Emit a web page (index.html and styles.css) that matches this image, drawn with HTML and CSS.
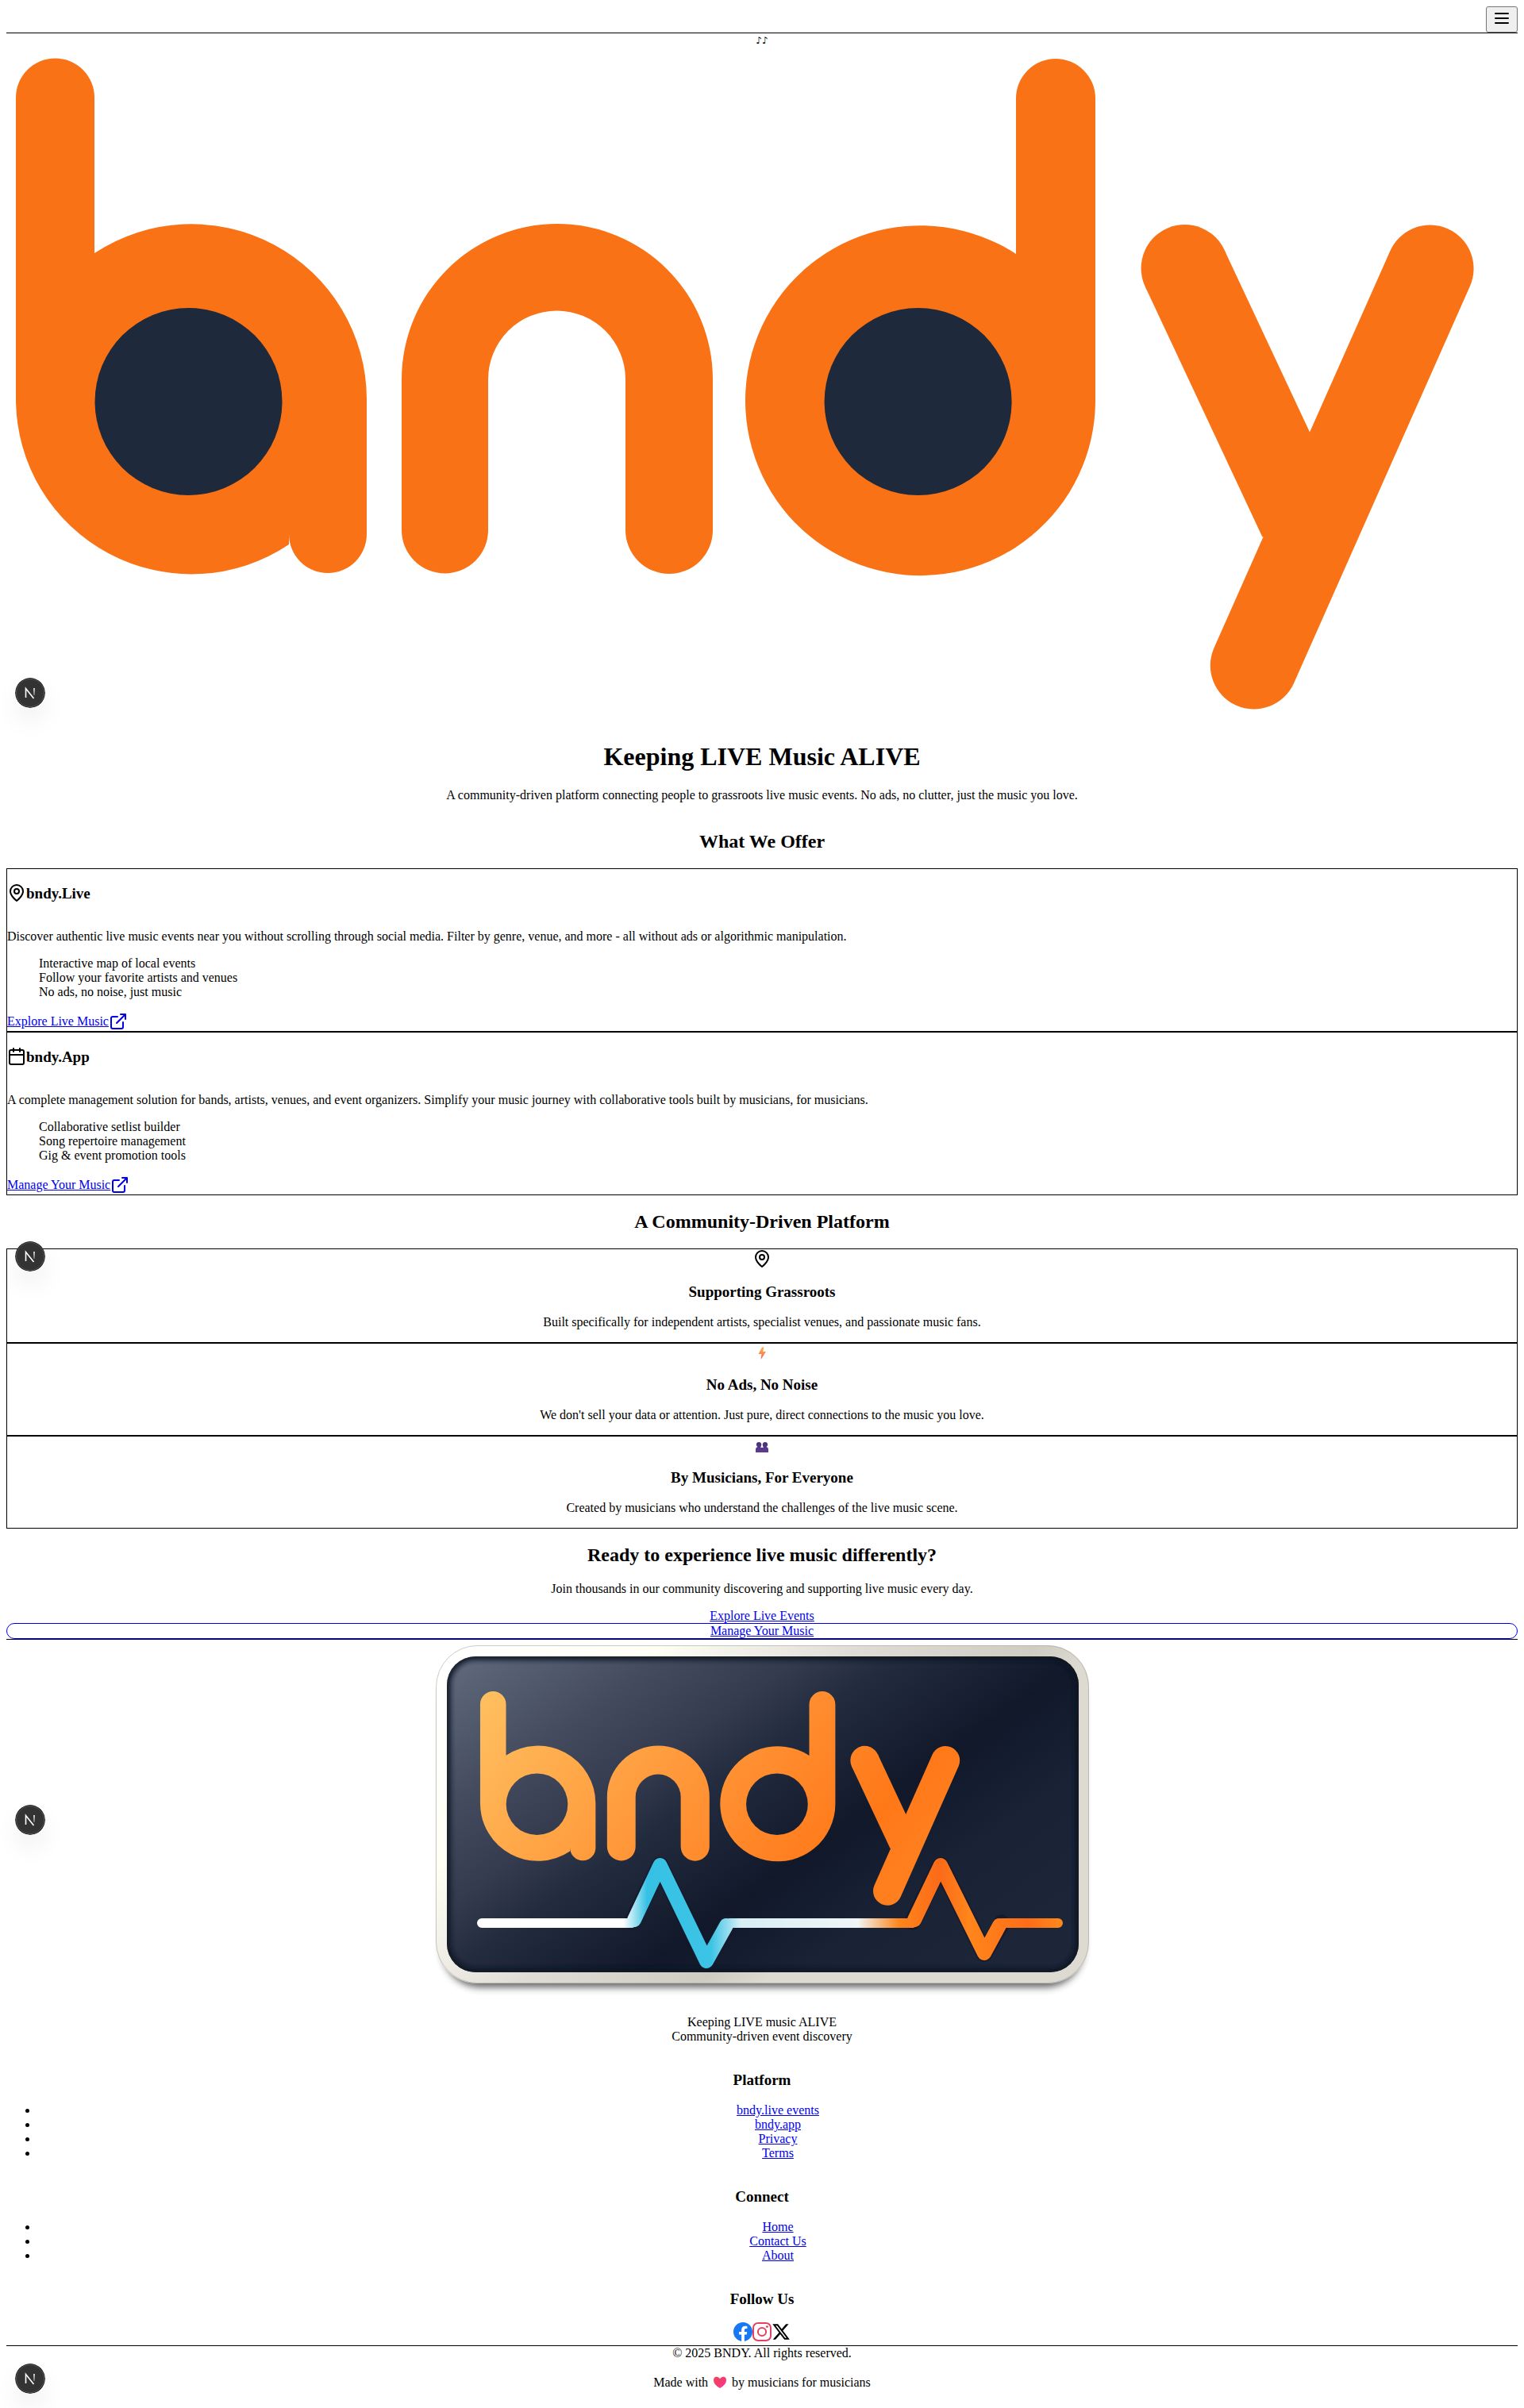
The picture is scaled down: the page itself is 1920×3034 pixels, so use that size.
FILE: index.html
```html
<!DOCTYPE html>
<html lang="en">
<head>
<meta charset="utf-8">
<meta name="viewport" content="width=device-width, initial-scale=1">
<title>bndy - Keeping LIVE Music ALIVE</title>
<link rel="stylesheet" href="styles.css">
</head>
<body>
<svg class="defs" width="0" height="0" aria-hidden="true">
  <defs>
    <g id="bndy-shapes">
      <path d="M12 63a49.500 49.500 0 0 1 99 0V259A221 221 0 0 1 454 443V613A49 49 0 0 1 356 613V626A221 221 0 0 1 12 443z"/>
      <path d="M498 418a196 196 0 0 1 392 0V608a55 55 0 0 1 -110 0V418a86.500 86.500 0 0 0 -173 0V608a54.500 54.500 0 0 1 -109 0z"/>
      <path d="M1272 64a50 50 0 0 1 100 0V445A220.500 220.500 0 1 1 1272 260z"/>
      <circle cx="1484.600" cy="278" r="55"/>
      <path d="M1484.600 278L1632.300 593.300" stroke="currentColor" stroke-width="110"/>
      <path d="M1793.600 278.500L1571.800 778.500" stroke="currentColor" stroke-width="110" stroke-linecap="round"/>
    </g>
    <g id="bndy-bowls">
      <circle cx="229.500" cy="446" r="118"/>
      <circle cx="1148.600" cy="446" r="118"/>
    </g>
    <symbol id="pin" viewBox="0 0 24 24">
      <path d="M20 10c0 6-8 12-8 12s-8-6-8-12a8 8 0 0 1 16 0z"/><circle cx="12" cy="10" r="3"/>
    </symbol>
    <symbol id="external" viewBox="0 0 24 24">
      <path d="M18 13v6a2 2 0 0 1-2 2H5a2 2 0 0 1-2-2V8a2 2 0 0 1 2-2h6M15 3h6v6M10 14L21 3"/>
    </symbol>
  </defs>
</svg>

<header class="topbar">
  <button class="menu" type="button" aria-label="Open menu">
    <svg class="icon" viewBox="0 0 24 24"><path d="M4 6h16M4 12h16M4 18h16"/></svg>
  </button>
</header>

<main>
  <section class="hero">
    <div class="notes">♪♪</div>
    <svg class="wordmark" viewBox="0 0 1904 854" role="img" aria-label="bndy">
      <use href="#bndy-shapes" class="wordmark-body"/>
      <use href="#bndy-bowls" class="wordmark-bowl"/>
    </svg>
    <h1>Keeping LIVE Music ALIVE</h1>
    <p>A community-driven platform connecting people to grassroots live music events. No ads, no clutter, just the music you love.</p>
  </section>

  <section class="offer">
    <h2>What We Offer</h2>
    <article class="card">
      <h3 class="card-title"><svg class="icon"><use href="#pin"/></svg>bndy.Live</h3>
      <p>Discover authentic live music events near you without scrolling through social media. Filter by genre, venue, and more - all without ads or algorithmic manipulation.</p>
      <ul class="features">
        <li>Interactive map of local events</li>
        <li>Follow your favorite artists and venues</li>
        <li>No ads, no noise, just music</li>
      </ul>
      <a class="card-link" href="#live">Explore Live Music<svg class="icon"><use href="#external"/></svg></a>
    </article>
    <article class="card">
      <h3 class="card-title"><svg class="icon" viewBox="0 0 24 24"><rect x="3" y="4" width="18" height="18" rx="2"/><path d="M16 2v4M8 2v4M3 10h18"/></svg>bndy.App</h3>
      <p>A complete management solution for bands, artists, venues, and event organizers. Simplify your music journey with collaborative tools built by musicians, for musicians.</p>
      <ul class="features">
        <li>Collaborative setlist builder</li>
        <li>Song repertoire management</li>
        <li>Gig &amp; event promotion tools</li>
      </ul>
      <a class="card-link" href="#app">Manage Your Music<svg class="icon"><use href="#external"/></svg></a>
    </article>
  </section>

  <section class="community">
    <h2>A Community-Driven Platform</h2>
    <article class="card">
      <svg class="icon"><use href="#pin"/></svg>
      <h3>Supporting Grassroots</h3>
      <p>Built specifically for independent artists, specialist venues, and passionate music fans.</p>
    </article>
    <article class="card">
      <svg class="emoji" viewBox="0 0 22 22" aria-hidden="true">
        <defs><linearGradient id="bolt" x1="0" y1="0" x2="0" y2="1"><stop offset="0" stop-color="#f9b44a"/><stop offset=".5" stop-color="#fb8b4b"/><stop offset="1" stop-color="#f0486a"/></linearGradient></defs>
        <path fill="url(#bolt)" d="M11 4.500h2.500L12 10h4L9.500 20l1-7H6.500z"/>
      </svg>
      <h3>No Ads, No Noise</h3>
      <p>We don't sell your data or attention. Just pure, direct connections to the music you love.</p>
    </article>
    <article class="card">
      <svg class="emoji" viewBox="0 0 22 22" aria-hidden="true">
        <defs><linearGradient id="people" x1="0" y1="0" x2="0" y2="1"><stop offset="0" stop-color="#46307a"/><stop offset="1" stop-color="#5f3d91"/></linearGradient></defs>
        <path fill="url(#people)" d="M3 20v-4q0-2.500 2.500-3Q3.800 12 3.800 10Q4 7 7 7T10.300 10Q10.300 12 9 13.500L11 14L13 13.500Q11.700 12 11.700 10Q12 7 15 7T18.200 10Q18.200 12 16.500 13Q19 13.500 19 16v4z"/>
      </svg>
      <h3>By Musicians, For Everyone</h3>
      <p>Created by musicians who understand the challenges of the live music scene.</p>
    </article>
  </section>

  <section class="cta">
    <h2>Ready to experience live music differently?</h2>
    <p>Join thousands in our community discovering and supporting live music every day.</p>
    <a class="cta-link" href="#live">Explore Live Events</a>
    <a class="cta-link cta-outline" href="#app">Manage Your Music</a>
  </section>
</main>

<footer class="footer">
  <svg class="plate" viewBox="540 2065 840 457" role="img" aria-label="bndy">
    <defs>
      <linearGradient id="frame" gradientUnits="userSpaceOnUse" x1="600" y1="2060" x2="1000" y2="2460">
        <stop offset="0" stop-color="#fff"/><stop offset=".3" stop-color="#fffff6"/><stop offset=".62" stop-color="#dfdcd5"/><stop offset=".9" stop-color="#cfccc4"/><stop offset="1" stop-color="#dddad2"/>
      </linearGradient>
      <linearGradient id="panel" gradientUnits="userSpaceOnUse" x1="570" y1="2086" x2="1015" y2="2717">
        <stop offset="0" stop-color="#616a7e"/><stop offset=".2" stop-color="#444b5e"/><stop offset=".33" stop-color="#343b4e"/><stop offset=".42" stop-color="#232b3e"/><stop offset=".6" stop-color="#10182a"/><stop offset=".75" stop-color="#1a2236"/><stop offset="1" stop-color="#1e263a"/>
      </linearGradient>
      <linearGradient id="letters" gradientUnits="userSpaceOnUse" x1="600" y1="2140" x2="1040" y2="2500">
        <stop offset="0" stop-color="#ffc060"/><stop offset=".5" stop-color="#ff9436"/><stop offset=".85" stop-color="#ff7818"/><stop offset="1" stop-color="#ff8020"/>
      </linearGradient>
      <linearGradient id="pulse" gradientUnits="userSpaceOnUse" x1="601" y1="0" x2="1339" y2="0">
        <stop offset="0" stop-color="#fff"/><stop offset=".25" stop-color="#fff"/><stop offset=".29" stop-color="#36c1e4"/><stop offset=".4" stop-color="#3cc4e6"/><stop offset=".45" stop-color="#d8eff4"/><stop offset=".65" stop-color="#f0f5f6"/><stop offset=".72" stop-color="#ff861c"/><stop offset=".79" stop-color="#fb6a18"/><stop offset=".84" stop-color="#ff861c"/><stop offset=".94" stop-color="#ff6c18"/><stop offset="1" stop-color="#ff8a1c"/>
      </linearGradient>
      <filter id="blur" x="-10%" y="-10%" width="120%" height="120%"><feGaussianBlur stdDeviation="5"/></filter>
      <filter id="soft" x="-10%" y="-10%" width="120%" height="120%"><feGaussianBlur stdDeviation="3"/></filter>
      <clipPath id="panel-clip"><rect x="563" y="2086" width="796" height="398" rx="36"/></clipPath>
      <mask id="letter-mask" maskUnits="userSpaceOnUse" x="540" y="2064" width="840" height="458">
        <g transform="translate(601 2125.500) scale(.329)">
          <use href="#bndy-shapes" class="mask-show"/>
          <use href="#bndy-bowls" class="mask-hide"/>
        </g>
      </mask>
    </defs>
    <rect x="557" y="2092" width="808" height="411" rx="48" fill="#333" opacity=".75" filter="url(#blur)"/>
    <rect x="549" y="2072" width="823" height="426" rx="52" fill="url(#frame)"/>
    <rect x="549.500" y="2072.500" width="822" height="425" rx="52" fill="none" stroke="#a9a79f" stroke-opacity=".6"/>
    <rect x="563" y="2086" width="796" height="398" rx="36" fill="url(#panel)"/>
    <g clip-path="url(#panel-clip)"><rect x="563" y="2086" width="796" height="398" rx="36" fill="none" stroke="#0a1224" stroke-width="9" filter="url(#soft)"/></g>
    <rect x="540" y="2064" width="840" height="458" fill="url(#letters)" mask="url(#letter-mask)"/>
    <g fill="none" stroke="#161a2b" stroke-linejoin="round" stroke-linecap="round" stroke-width="21">
      <path d="M797 2420L831.500 2349L890 2470L917 2422M1150 2420L1185 2349L1240 2460L1262 2422"/>
    </g>
    <g fill="none" stroke="url(#pulse)" stroke-linejoin="round" stroke-linecap="round">
      <path stroke-width="12" d="M607 2422H796L831.500 2349L890 2470L919 2422H1149L1185 2349L1240 2460L1263 2422H1333"/>
      <path stroke-width="18" d="M799 2418L831.500 2349L890 2470L915 2425M1152 2418L1185 2349L1240 2460L1259 2425"/>
    </g>
  </svg>
  <p class="tagline">Keeping LIVE music ALIVE<br>Community-driven event discovery</p>

  <nav class="footer-group" aria-labelledby="platform">
    <h3 id="platform">Platform</h3>
    <ul>
      <li><a href="#live">bndy.live events</a></li>
      <li><a href="#app">bndy.app</a></li>
      <li><a href="#privacy">Privacy</a></li>
      <li><a href="#terms">Terms</a></li>
    </ul>
  </nav>
  <nav class="footer-group" aria-labelledby="connect">
    <h3 id="connect">Connect</h3>
    <ul>
      <li><a href="#home">Home</a></li>
      <li><a href="#contact">Contact Us</a></li>
      <li><a href="#about">About</a></li>
    </ul>
  </nav>
  <div class="footer-group">
    <h3>Follow Us</h3>
    <div class="social">
      <a href="#facebook" aria-label="Facebook"><svg viewBox="0 0 24 24" fill="#1877f2"><path d="M24 12.073c0-6.627-5.373-12-12-12s-12 5.373-12 12c0 5.990 4.388 10.954 10.125 11.854v-8.385H7.078v-3.470h3.047V9.430c0-3.007 1.792-4.669 4.533-4.669 1.312 0 2.686.235 2.686.235v2.953H15.830c-1.491 0-1.956.925-1.956 1.874v2.250h3.328l-.532 3.470h-2.796v8.385C19.612 23.027 24 18.062 24 12.073z"/></svg></a>
      <a href="#instagram" aria-label="Instagram"><svg viewBox="0 0 24 24" fill="none" stroke="#e4405f" stroke-width="2"><rect x="1" y="1" width="22" height="22" rx="6"/><circle cx="12" cy="12" r="5.100"/><circle cx="18.400" cy="5.600" r="1.440" fill="#e4405f" stroke="none"/></svg></a>
      <a href="#x" aria-label="X"><svg viewBox="0 0 24 24" fill="#000"><path d="M18.244 2.250h3.308l-7.227 8.260 8.502 11.240H16.170l-5.214-6.817L4.990 21.750H1.680l7.730-8.835L1.254 2.250H8.080l4.713 6.231zm-1.161 17.520h1.833L7.084 4.126H5.117z"/></svg></a>
    </div>
  </div>
  <div class="legal">
    <div>© 2025 BNDY. All rights reserved.</div>
    <p class="made">Made with
      <svg class="heart" viewBox="0 0 22 18" role="img" aria-label="love">
        <defs><linearGradient id="love" x1="0" y1="0" x2="1" y2="1"><stop offset="0" stop-color="#f5435f"/><stop offset=".5" stop-color="#f23d6c"/><stop offset="1" stop-color="#ff2fb0"/></linearGradient></defs>
        <path fill="url(#love)" d="M11 4Q13 1.500 15.500 1.500Q19 2 19 6Q19 11.500 11 16Q3 11.500 3 6Q3 2 6.500 1.500Q9 1.500 11 4z"/>
      </svg>
      by musicians for musicians</p>
  </div>
</footer>

<svg class="dev-badge badge-1" viewBox="0 0 38 38" aria-hidden="true"><defs><linearGradient id="nfade" gradientUnits="userSpaceOnUse" x1="0" y1="13" x2="0" y2="25"><stop offset="0" stop-color="#fff"/><stop offset="1" stop-color="#fff" stop-opacity=".1"/></linearGradient></defs><g id="nbadge"><circle cx="19" cy="19" r="19" fill="#222"/><circle cx="19" cy="19" r="17.500" fill="#333" stroke="#555"/><path d="M13.500 25V13.500L23.500 26" fill="none" stroke="#fff" stroke-width="1.600"/><path d="M24 13v9" stroke="url(#nfade)" stroke-width="1.600"/></g></svg>
<svg class="dev-badge badge-2" viewBox="0 0 38 38" aria-hidden="true"><use href="#nbadge"/></svg>
<svg class="dev-badge badge-3" viewBox="0 0 38 38" aria-hidden="true"><use href="#nbadge"/></svg>
<svg class="dev-badge badge-4" viewBox="0 0 38 38" aria-hidden="true"><use href="#nbadge"/></svg>
</body>
</html>
```
FILE: styles.css
```css
body {
  position: relative;
  margin: 0;
  padding: 8px;
  background: #fff;
  color: #000;
  font: 16px/18px "Liberation Serif", "Times New Roman", serif;
}

h1, h2, h3 { font-weight: bold; }
h1 { margin: 21px 0; font-size: 32px; line-height: 37px; }
h2 { margin: 20px 0; font-size: 24px; line-height: 27px; text-align: center; }
h3 { margin: 19px 0; font-size: 19px; line-height: 21px; }
p { margin: 16px 0; }
a { color: #0000ee; text-decoration: underline; }

.defs { position: absolute; }

.icon {
  width: 24px;
  height: 24px;
  flex: none;
  fill: none;
  stroke: currentColor;
  stroke-width: 2;
  stroke-linecap: round;
  stroke-linejoin: round;
}

/* Header */
.topbar {
  display: flex;
  justify-content: flex-end;
  border-bottom: 1px solid #000;
}
.menu {
  display: flex;
  padding: 2px 7px 5px;
  border: 1px solid #767676;
  border-radius: 3px;
  background: #efefef;
  color: #000;
}

/* Hero */
.hero, .community, .cta, .footer { text-align: center; }
.hero, .offer, .community, .cta { display: flow-root; }
.notes {
  height: 18px;
  font-family: "DejaVu Sans", sans-serif;
  font-size: 12px;
  font-weight: bold;
}
.wordmark { display: block; width: 100%; height: auto; }
.wordmark-body { fill: #f97316; color: #f97316; }
.wordmark-bowl { fill: #1e293b; }

/* Cards */
.card {
  display: flow-root;
  border: 1px solid #000;
}
.offer .card-title {
  display: flex;
  align-items: center;
  height: 24px;
  margin: 18px 0 34px;
}
.features {
  margin: 16px 0;
  padding-left: 40px;
  list-style: none;
}
.card-link { display: flex; align-items: center; }
.community .icon, .emoji { display: block; margin: 0 auto; }
.emoji { width: 22px; height: 22px; }

/* Call to action */
.cta-link { display: block; }
.cta-outline { border: 1px solid #0000ee; border-radius: 10px; }

/* Footer */
.footer { border-top: 1px solid #000; }
.plate { display: block; width: 840px; max-width: 100%; height: auto; margin: 0 auto; }
.mask-show { fill: #fff; color: #fff; }
.mask-hide { fill: #000; }
.footer-group { display: flow-root; }
.footer-group ul { margin: 0 0 16px; padding-left: 40px; }
.tagline { margin: 16px 0; }
.social { display: flex; justify-content: center; padding-bottom: 5px; }
.social a { display: flex; }
.social svg { width: 24px; height: 24px; }
.legal { display: flow-root; border-top: 1px solid #000; }
.made {
  display: flex;
  justify-content: center;
  align-items: flex-end;
  gap: 4px;
  height: 21px;
}
.heart { width: 22px; height: 18px; }

/* Floating development badge */
.dev-badge {
  position: absolute;
  left: 19px;
  width: 38px;
  height: 38px;
  border-radius: 50%;
  box-shadow: 0 16px 32px -4px rgba(0, 0, 0, .1);
}
.badge-1 { top: 854px; }
.badge-2 { top: 1564px; }
.badge-3 { top: 2274px; }
.badge-4 { bottom: 19px; }
```
